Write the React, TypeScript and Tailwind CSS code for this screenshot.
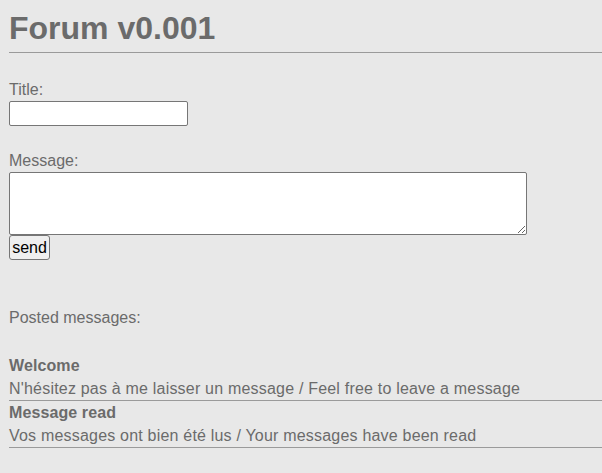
import React from 'react';

interface Post {
    title: string;
    body: string;
}

const posts: Post[] = [
    { title: 'Welcome', body: "N'hésitez pas à me laisser un message / Feel free to leave a message" },
    { title: 'Message read', body: 'Vos messages ont bien été lus / Your messages have been read' },
];

const App: React.FC = () => {
    return (
        <div className="min-h-[473px] bg-[#e8e8e8] pl-[9px] text-[16px] text-[#6b6b6b] [font-family:'Liberation_Sans',Arial,sans-serif]">
            {/* Header */}
            <h1 className="pt-[10px] text-[32px] font-bold leading-[37px]">Forum v0.001</h1>
            <div className="mt-[5px] border-t border-[#9a9a9a]" />

            {/* Form */}
            <form className="flex flex-col items-start" onSubmit={(e) => e.preventDefault()}>
                <label className="mt-[28px] leading-[18px]">Title:</label>
                <input
                    type="text"
                    className="mt-[2px] h-[25px] w-[179px] rounded-[2px] border border-[#767676] bg-white px-1 text-black outline-none"
                />
                <label className="mt-[26px] leading-[18px]">Message:</label>
                <textarea className="mt-[2px] block h-[63px] w-[518px] rounded-[2px] border border-[#767676] bg-white p-1 text-black outline-none" />
                <button
                    type="submit"
                    className="h-[25px] w-[41px] rounded-[3px] border border-[#767676] bg-[#efefef] text-[16px] leading-[18px] text-black"
                >
                    send
                </button>
            </form>

            {/* Posted messages */}
            <div className="mt-[49px] leading-[18px]">Posted messages:</div>
            <div className="mt-[27px]">
                {posts.map((post) => (
                    <div key={post.title} className="border-b border-[#9a9a9a]">
                        <div className="font-bold leading-[23px] tracking-[0.1px]">{post.title}</div>
                        <div className="leading-[23px] tracking-[0.2px]">{post.body}</div>
                    </div>
                ))}
            </div>
        </div>
    );
};

export default App;
